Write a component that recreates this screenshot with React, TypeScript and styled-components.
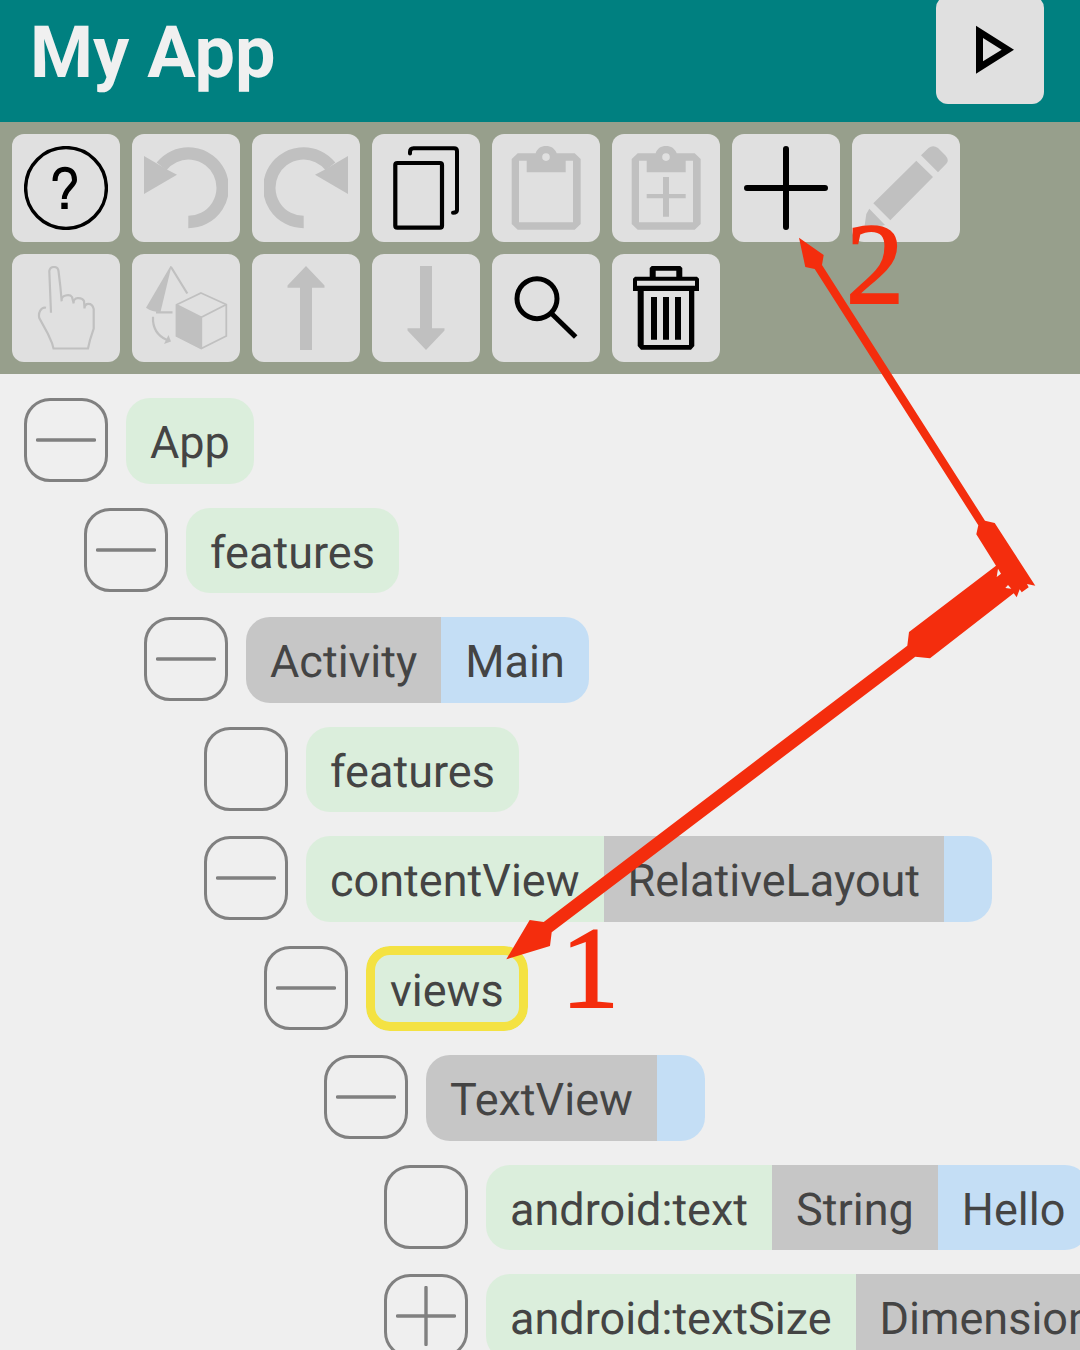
import React from "react";
import styled, { createGlobalStyle } from "styled-components";

const GlobalStyle = createGlobalStyle`
  * { box-sizing: border-box; }
  body {
    margin: 0;
    background: #efefef;
    font-family: Roboto, "Noto Sans", sans-serif;
    text-rendering: geometricPrecision;
  }
`;

const Page = styled.div`
  position: relative;
  display: flex;
  flex-direction: column;
  height: 100vh;
  overflow: hidden;
  background: #efefef;
`;

const Header = styled.header`
  flex: none;
  display: flex;
  justify-content: space-between;
  align-items: center;
  height: 122px;
  padding: 0 36px 18px 30px;
  background: #008080;
`;

const Title = styled.h1`
  margin: 0;
  padding-top: 2px;
  color: #f0f0f0;
  font-size: 72px;
  line-height: 84px;
  font-weight: 700;
`;

const Toolbar = styled.div`
  flex: none;
  display: flex;
  flex-wrap: wrap;
  gap: 12px;
  padding: 12px;
  background: #979f8c;
`;

const ToolButton = styled.button`
  flex: none;
  display: flex;
  width: 108px;
  height: 108px;
  padding: 12px;
  border: 0;
  border-radius: 12px;
  background: #e0e0e0;
  color: #000;

  &:disabled {
    color: #c0c0c0;
  }
`;

const RunButton = styled(ToolButton)`
  align-self: flex-end;
`;

const IconBox = styled.svg`
  display: block;
  width: 84px;
  height: 84px;
`;

const Tree = styled.ul`
  flex: 1;
  display: flex;
  flex-direction: column;
  gap: 24px;
  margin: 0;
  padding: 24px;
  list-style: none;
  overflow: hidden;
`;

const Row = styled.li<{ $depth: number }>`
  flex: none;
  display: flex;
  align-items: flex-start;
  gap: 18px;
  padding-left: ${(p) => p.$depth * 60}px;
`;

const Toggle = styled.button`
  flex: none;
  display: flex;
  align-items: center;
  justify-content: center;
  width: 84px;
  height: 84px;
  padding: 0;
  border: 3px solid #808080;
  border-radius: 26px;
  background: transparent;
  color: #808080;
`;

const ToggleMark = styled.svg`
  display: block;
  width: 60px;
  height: 60px;
`;

const Node = styled.div<{ $selected?: boolean }>`
  position: relative;
  flex: none;
  display: flex;
  border-radius: 24px;
  overflow: hidden;

  &::after {
    content: "";
    display: ${(p) => (p.$selected ? "block" : "none")};
    position: absolute;
    inset: 0;
    border: 9px solid #f4e242;
    border-radius: 24px;
  }
`;

const colours = { name: "#dbeedc", type: "#c6c6c6", value: "#c4def5" };

const Part = styled.span<{ $kind: keyof typeof colours }>`
  padding: 20px 24px 16px;
  background: ${(p) => colours[p.$kind]};
  color: #444;
  font-size: 45px;
  line-height: 1.1;
  white-space: nowrap;
`;

const Marks = styled.svg`
  position: absolute;
  top: 0;
  left: 0;
  width: 1080px;
  height: 1350px;
  pointer-events: none;
`;

const StepNumber = styled.span<{ $x: number; $y: number }>`
  position: absolute;
  left: ${(p) => p.$x}px;
  top: ${(p) => p.$y}px;
  color: #f42d0d;
  font-family: "Liberation Serif", serif;
  font-size: 116px;
  line-height: 118px;
  -webkit-text-stroke: 2px #f42d0d;
  pointer-events: none;
`;

function Icon({ children }: { children: React.ReactNode }) {
  return (
    <IconBox viewBox="0 0 84 84" fill="currentColor" aria-hidden="true">
      {children}
    </IconBox>
  );
}

const line = (width: number) => ({
  fill: "none",
  stroke: "currentColor",
  strokeWidth: width,
});

const undoShape = (
  <>
    <path d="M17.5 20.4A34.3 34.3 0 1 1 44.3 76" {...line(12.4)} />
    <path d="M0 10L12 17L22 23L33 28.7L0 48Z" />
  </>
);

const arrowShape = (
  <path d="M42 0L60.5 19.5V21.7H48V84H36V21.7H23.5V19.5Z" />
);

const clipboardShape = (
  <path
    fillRule="evenodd"
    d="M13.7 7.3H31.7C33 2.5 37 0 42 0S51 2.5 52.7 7.3H70.7L76.7 13V78L70.7 83.7H13.7L7.7 78V13ZM15 14.7V76.3H69V14.7H61.7V26.3H22.7V14.7ZM42 7.3A3.8 3.8 0 1 0 42 14.9A3.8 3.8 0 1 0 42 7.3Z"
  />
);

const tools: { label: string; enabled?: boolean; icon: React.ReactNode }[] = [
  {
    label: "Help",
    enabled: true,
    icon: (
      <>
        <circle cx="42" cy="42" r="40.4" {...line(3.4)} />
        <path
          d="M31 35C31 27 35 23.2 41 23.2S50.5 27 50.5 34C50.5 40 40.3 43 40.3 53"
          {...line(5)}
        />
        <path d="M37.3 56.7H43.7V63H37.3Z" />
      </>
    ),
  },
  { label: "Undo", icon: undoShape },
  { label: "Redo", icon: <g transform="translate(84 0) scale(-1 1)">{undoShape}</g> },
  {
    label: "Copy",
    enabled: true,
    icon: (
      <>
        <rect x="11.3" y="17" width="46.7" height="64.7" rx="2" {...line(4.2)} />
        <path
          d="M26 7.5V6Q26 2.2 29.5 2.2H70Q73 2.2 73 5V64Q73 66.7 69 66.7"
          strokeLinecap="round"
          {...line(4)}
        />
      </>
    ),
  },
  { label: "Paste", icon: clipboardShape },
  {
    label: "Paste inside",
    icon: (
      <>
        {clipboardShape}
        <path d="M39 31H45V48H61.7V52.3H45V70.7H39V52.3H22.7V48H39Z" />
      </>
    ),
  },
  {
    label: "Add",
    enabled: true,
    icon: <path d="M42 3V81M3 42H81" strokeLinecap="round" {...line(6)} />,
  },
  {
    label: "Edit",
    icon: (
      <path d="M57 9.3L64.5 2Q69 -1.5 74 2L81.5 9.5Q85.5 14 82.5 17.5L74 26.3ZM52.3 14.7L69 31L26.3 74.3L9.3 57.3ZM5.3 62.7L21 79L0 84L2.3 68Z" />
    ),
  },
  {
    label: "Select",
    icon: (
      <path
        d="M27 46.7L25.3 5Q26 1 30 1Q34 1 34.5 5L36.3 20L37.7 35.3C36.5 28.5 46 28 48 31L49.7 37.5C48.5 30.5 58 31 60 35L60.5 42.5C60.5 36.5 68 36 69.7 43V62.5L66 74L64 82.5H29.5L28 77L24 68L15.3 52C14 47 17 40.5 22 41.7"
        {...line(2.2)}
      />
    ),
  },
  {
    label: "Convert",
    icon: (
      <>
        <path d="M26.5 0L2 41.7Q8 46 16.5 46L27.5 0Z" />
        <path d="M27 1L43.3 27.5M12 46.3H28.5M9 50.7C8.5 61 13 69.5 23 74" {...line(2.2)} />
        <path d="M27 75.5L24.5 69L20 78Z" />
        <path d="M32 38.7L57.3 51.3V83L32 70Z" />
        <path
          d="M57 27L82.3 38.5V70L57.3 82.5L32.5 70V38.7ZM32.5 38.7L57.3 51.3L82.3 38.5M57.3 51.3V82.5"
          {...line(1.8)}
        />
      </>
    ),
  },
  { label: "Move up", icon: arrowShape },
  { label: "Move down", icon: <g transform="translate(0 84) scale(1 -1)">{arrowShape}</g> },
  {
    label: "Search",
    enabled: true,
    icon: (
      <>
        <circle cx="33" cy="32.7" r="20" {...line(5)} />
        <path d="M47 47L71.7 71" {...line(5)} />
      </>
    ),
  },
  {
    label: "Delete",
    enabled: true,
    icon: (
      <>
        <path
          fillRule="evenodd"
          d="M27.7 0H56.3L58.3 2V10.7H73L75 12.7V25H70.3V80L67 83.7H17L13.7 80V25H9V12.7L11 10.7H25.7V2ZM31.7 4.7V10.7H52.3V4.7ZM13 14.7V19.7H71V14.7ZM19.7 25V79H65V25Z"
        />
        <path d="M30 31V73.7M42 31V73.7M54 31V73.7" {...line(6)} />
      </>
    ),
  },
];

type TreeNode = {
  depth: number;
  mark?: "minus" | "plus";
  selected?: boolean;
  name?: string;
  type?: string;
  value?: string;
};

const nodes: TreeNode[] = [
  { depth: 0, mark: "minus", name: "App" },
  { depth: 1, mark: "minus", name: "features" },
  { depth: 2, mark: "minus", type: "Activity", value: "Main" },
  { depth: 3, name: "features" },
  { depth: 3, mark: "minus", name: "contentView", type: "RelativeLayout", value: "" },
  { depth: 4, mark: "minus", name: "views", selected: true },
  { depth: 5, mark: "minus", type: "TextView", value: "" },
  { depth: 6, name: "android:text", type: "String", value: "Hello" },
  { depth: 6, mark: "plus", name: "android:textSize", type: "Dimension" },
];

export default function App() {
  return (
    <Page>
      <GlobalStyle />
      <Header>
        <Title>My App</Title>
        <RunButton aria-label="Run">
          <Icon>
            <path
              fillRule="evenodd"
              d="M28 17.7L66 41.7L28 65.7ZM35 30V53.3L53.7 41.7Z"
            />
          </Icon>
        </RunButton>
      </Header>

      <Toolbar role="toolbar">
        {tools.map((tool) => (
          <ToolButton key={tool.label} aria-label={tool.label} disabled={!tool.enabled}>
            <Icon>{tool.icon}</Icon>
          </ToolButton>
        ))}
      </Toolbar>

      <Tree>
        {nodes.map((node, index) => (
          <Row key={index} $depth={node.depth}>
            <Toggle aria-label="Toggle">
              {node.mark && (
                <ToggleMark viewBox="0 0 60 60" aria-hidden="true">
                  <path
                    d={node.mark === "plus" ? "M1.5 30H58.5M30 1.5V58.5" : "M1.5 30H58.5"}
                    strokeLinecap="round"
                    {...line(3.4)}
                  />
                </ToggleMark>
              )}
            </Toggle>
            <Node $selected={node.selected}>
              {node.name !== undefined && <Part $kind="name">{node.name}</Part>}
              {node.type !== undefined && <Part $kind="type">{node.type}</Part>}
              {node.value !== undefined && <Part $kind="value">{node.value}</Part>}
            </Node>
          </Row>
        ))}
      </Tree>

      <Marks viewBox="0 0 1080 1350" aria-hidden="true">
        <path
          fill="#f42d0d"
          fillRule="evenodd"
          d="M799 237.7L823.7 255L822 265L985 520.7L994.7 523L1035.3 585.7L1027 584L1028.7 587.3L1021.7 592.3L1019.7 589.3L1016.7 597.3L1013.7 593.3L930 658.3L915.3 656.7L551.7 932.3L550 946L506.3 959.3L529.7 920L543.7 922L907.3 645.7L909 632L996 565.7L976.3 534.3L978.3 525.3L814.7 269L805.3 267ZM998 568.7L1001 573.7L996.7 577ZM1005.3 588L1008 585L1011.3 588.7Z"
        />
      </Marks>
      <StepNumber $x={561} $y={910}>1</StepNumber>
      <StepNumber $x={846} $y={206}>2</StepNumber>
    </Page>
  );
}
